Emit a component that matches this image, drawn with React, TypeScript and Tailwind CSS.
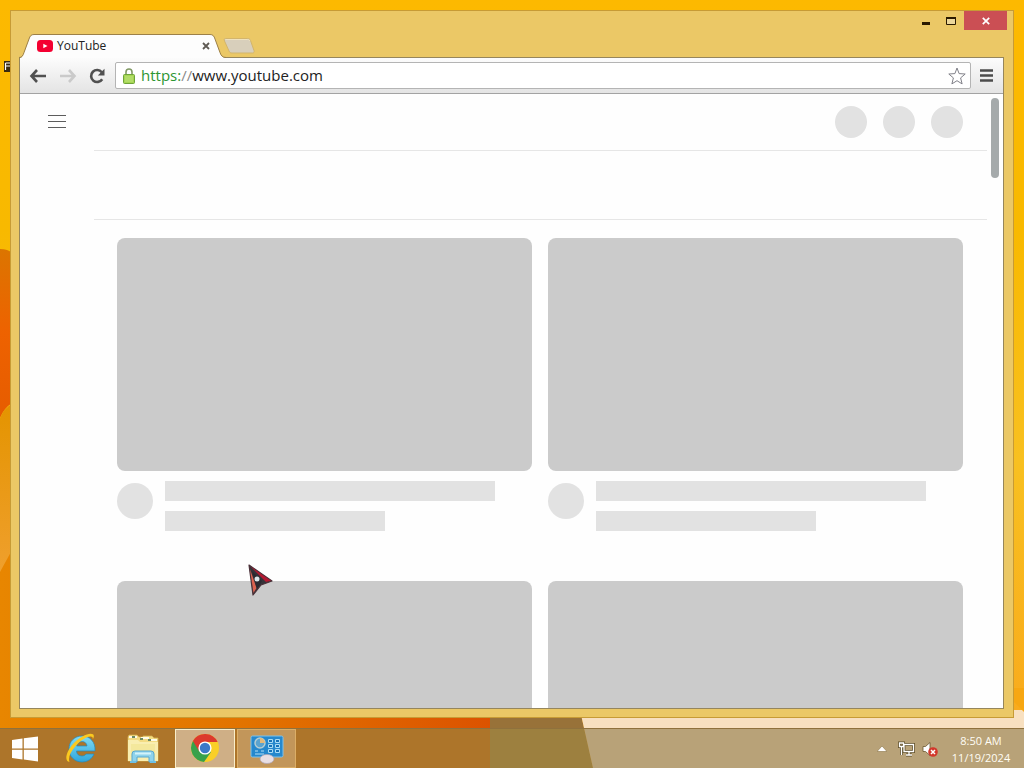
function Wallpaper() {
  return (
    <svg className="absolute inset-0 h-full w-full" viewBox="0 0 1024 768" preserveAspectRatio="none" aria-hidden="true">
      <defs>
        <linearGradient id="sky" x1="0" y1="0" x2="0" y2="1">
          <stop offset="0" stopColor="#fdb900" />
          <stop offset="0.3" stopColor="#f8b900" />
          <stop offset="0.6" stopColor="#f8c020" />
          <stop offset="1" stopColor="#f9a61c" />
        </linearGradient>
        <linearGradient id="ember" x1="0" y1="0" x2="0" y2="1">
          <stop offset="0" stopColor="#dc7500" />
          <stop offset="0.5" stopColor="#ee6200" />
          <stop offset="1" stopColor="#e65c00" />
        </linearGradient>
        <linearGradient id="amber" x1="0" y1="0" x2="0" y2="1">
          <stop offset="0" stopColor="#e49400" />
          <stop offset="0.5" stopColor="#f0a030" />
          <stop offset="1" stopColor="#e8a040" />
        </linearGradient>
        <linearGradient id="floor" x1="0" y1="0" x2="1" y2="0">
          <stop offset="0" stopColor="#e88600" />
          <stop offset="0.5" stopColor="#e27300" />
          <stop offset="1" stopColor="#dc5200" />
        </linearGradient>
      </defs>
      <rect width="1024" height="768" fill="url(#sky)" />
      <path d="M0 249q8 0 12 4v150q-8 5-12 15z" fill="url(#ember)" />
      <path d="M0 418q4-10 12-14v360H0z" fill="url(#amber)" />
      <path d="M0 572l12-22v160h482v58H0z" fill="url(#floor)" />
      <path d="M0 728h494v40H0z" fill="#e07c14" />
      <path d="M490 710h90l4 18h-94z" fill="#987239" />
      <path d="M490 728h94l9 40H490z" fill="#bd9444" />
      <path d="M580 710h444v58H593z" fill="#f8e0c0" />
      <path d="M1012 700l12 12v-24h-12z" fill="#f7a712" />
    </svg>
  );
}

function TabStrip() {
  return (
    <div className="-mb-px flex items-end self-end pl-2">
      <div className="relative h-6 w-[207px]">
        <svg className="absolute inset-0" width="207" height="24" viewBox="0 0 207 24" aria-hidden="true">
          <path
            d="M0 24c3 0 4-2 5-5l5-14c1-3 2-4.500 5-4.500h176c3 0 4 1.500 5 4.500l5 14c1 3 2.500 4.500 6 5z"
            fill="#fdfdfd"
          />
          <path
            d="M0 23.500c3 0 4-2 5-5l5-13.500c1-3 2-4.500 5-4.500h176c3 0 4 1.500 5 4.500l5 13.500c1 3 2.500 5 6 5"
            fill="none"
            stroke="#9c8048"
          />
        </svg>
        <div className="relative flex h-full items-center pr-3 pl-[18px]">
          <svg width="16" height="12" viewBox="0 0 16 12" aria-hidden="true">
            <rect width="16" height="12" rx="3.500" fill="#f40031" />
            <path d="M6.300 3.700v4.600L10.500 6z" fill="#fff" />
          </svg>
          <span className="ml-1 flex-1 text-xs">YouTube</span>
          <button type="button" aria-label="Close tab" className="flex size-4 items-center justify-center">
            <svg width="8" height="8" viewBox="0 0 8 8" aria-hidden="true">
              <path d="M1 1l6 6M7 1L1 7" stroke="#5f5a54" strokeWidth="1.800" />
            </svg>
          </button>
        </div>
      </div>
      <button type="button" aria-label="New tab" className="mb-1 -ml-[3px]">
        <svg width="32" height="16" viewBox="0 0 32 16" aria-hidden="true">
          <path
            d="M2.500.5h22c1.500 0 2.500.5 3 2l3.500 10c.4 1.500 0 2.500-1.500 2.500H9c-1.500 0-2.500-.5-3-2L1.500 3C1 1.500 1 .5 2.500.5z"
            fill="#d8cfbb"
            stroke="#d3b56c"
          />
          <path d="M2.500 1.500h22c1 0 2 .5 2.400 1.500" fill="none" stroke="#efe2be" />
        </svg>
      </button>
    </div>
  );
}

function WindowControls() {
  return (
    <div className="flex h-[19px] pr-[6px]">
      <button type="button" aria-label="Minimize" className="flex w-[25px] items-center justify-center">
        <svg width="10" height="9" viewBox="0 0 10 9" aria-hidden="true">
          <path d="M1 6h8v3H1z" fill="#2a1a00" />
        </svg>
      </button>
      <button type="button" aria-label="Maximize" className="flex w-[26px] items-center justify-center">
        <svg width="10" height="8" viewBox="0 0 10 8" aria-hidden="true">
          <path d="M.5 1v6.500h9V1" fill="#ecd79a" stroke="#2a1a00" />
          <path d="M0 0h10v2H0z" fill="#2a1a00" />
        </svg>
      </button>
      <button type="button" aria-label="Close" className="flex w-[43px] items-center justify-center bg-[#cb4f54]">
        <svg width="8" height="8" viewBox="0 0 8 8" aria-hidden="true">
          <path d="M.8.8l6.400 6.400M7.200.8L.8 7.200" stroke="#fff" strokeWidth="1.700" />
        </svg>
      </button>
    </div>
  );
}

function ArrowIcon() {
  return (
    <svg width="18" height="14" viewBox="0 0 18 14" aria-hidden="true">
      <path d="M8 1L2.500 7 8 13M2.500 7H17" fill="none" stroke="currentColor" strokeWidth="2.600" />
    </svg>
  );
}

function Toolbar() {
  return (
    <div className="flex h-9 shrink-0 items-center border-b border-[#a3a3a3] bg-linear-to-b from-[#fcfcfc] to-[#e4e4e4] pr-[10px] pl-2">
      <button type="button" aria-label="Back" className="flex w-5 justify-center text-[#505050]">
        <ArrowIcon />
      </button>
      <button type="button" aria-label="Forward" className="ml-[10px] flex w-5 justify-center text-[#cacaca]">
        <span className="rotate-180">
          <ArrowIcon />
        </span>
      </button>
      <button type="button" aria-label="Reload" className="ml-[9px] flex w-5 justify-center">
        <svg width="16" height="16" viewBox="0 0 16 16" aria-hidden="true">
          <path d="M12.800 4.200A6 6 0 1 0 13.200 11.200" fill="none" stroke="#505050" strokeWidth="2.600" />
          <path d="M15.500.8v6.700H8.800z" fill="#505050" />
        </svg>
      </button>
      <div className="ml-2 flex h-[27px] flex-1 items-center rounded-[2px] border border-[#b4b4b4] bg-white pr-1 pl-[7px]">
        <svg width="12" height="16" viewBox="0 0 12 16" aria-hidden="true">
          <path d="M3 7V4a3 3 0 0 1 6 0v3" fill="none" stroke="#829a66" strokeWidth="1.600" />
          <rect x=".5" y="6.500" width="11" height="9" rx="1" fill="#a5d652" stroke="#6fa33a" />
          <path d="M2 9h8M2 11h8M2 13h8" stroke="#c6e78c" strokeWidth=".8" />
        </svg>
        <a href="https://www.youtube.com" className="mb-px ml-[6px] flex-1 text-[15px] leading-5 text-[#222]">
          <span className="text-[#2c9632]">https:</span>
          <span className="text-[#8a8a8a]">//</span>www.youtube.com
        </a>
        <button type="button" aria-label="Bookmark this page">
          <svg width="18" height="18" viewBox="0 0 18 18" aria-hidden="true">
            <path
              d="M9 1l2.100 5.600 6.100.4-4.600 3.900 1.500 6L9 13.700l-5.100 3.200 1.500-6L.8 7l6.100-.4z"
              fill="#fff"
              stroke="#808088"
              strokeLinejoin="round"
            />
          </svg>
        </button>
      </div>
      <button type="button" aria-label="Menu" className="ml-[9px]">
        <svg width="13" height="13" viewBox="0 0 13 13" aria-hidden="true">
          <path d="M0 1.500h13M0 6.500h13M0 11.500h13" stroke="#4c4c4c" strokeWidth="2.600" />
        </svg>
      </button>
    </div>
  );
}

function VideoCard() {
  return (
    <article>
      <div className="aspect-video rounded-lg bg-[#cbcbcb]" />
      <div className="flex gap-3 pt-[10px]">
        <div className="mt-[2px] size-9 shrink-0 rounded-full bg-[#e2e2e2]" />
        <div className="flex flex-1 flex-col gap-[10px]">
          <div className="h-5 w-[90%] bg-[#e2e2e2]" />
          <div className="h-5 w-[60%] bg-[#e2e2e2]" />
        </div>
      </div>
    </article>
  );
}

function Page() {
  return (
    <main className="flex min-h-0 flex-1 overflow-hidden bg-[#fefefe]">
      <button type="button" aria-label="Guide" className="mt-[15px] ml-[25px] flex size-6 shrink-0 items-center justify-center">
        <svg width="18" height="13" viewBox="0 0 18 13" aria-hidden="true">
          <path d="M0 .5h18M0 6.500h18M0 12.500h18" stroke="#5c5c5c" />
        </svg>
      </button>
      <div className="ml-[25px] min-w-0 flex-1">
        <header className="flex h-[57px] items-center justify-end gap-4 border-b border-[#e6e6e6] pr-6">
          <div className="size-8 rounded-full bg-[#e2e2e2]" />
          <div className="size-8 rounded-full bg-[#e2e2e2]" />
          <div className="size-8 rounded-full bg-[#e2e2e2]" />
        </header>
        <div className="h-[69px] border-b border-[#e6e6e6]" />
        <div className="grid grid-cols-2 gap-x-4 gap-y-[50px] pt-[18px] pr-6 pl-[23px]">
          <VideoCard />
          <VideoCard />
          <VideoCard />
          <VideoCard />
        </div>
      </div>
      <div className="mt-1 mr-1 ml-1 h-20 w-2 shrink-0 rounded-full bg-[#a5aaab]" />
    </main>
  );
}

function StartIcon() {
  return (
    <svg width="28" height="26" viewBox="0 0 28 26" aria-hidden="true">
      <path d="M1 4l10.500-1.500v10H1zM12.800 2.300L27 .5v12H12.800zM1 13.700h10.500v9.800L1 22zM12.800 13.700H27v11.800l-14.200-1.900z" fill="#fff" />
    </svg>
  );
}

function ExplorerEIcon() {
  return (
    <svg width="32" height="32" viewBox="0 0 32 32" aria-hidden="true">
      <defs>
        <linearGradient id="ie" x1="0" y1="0" x2="0" y2="1">
          <stop offset="0" stopColor="#80dcf4" />
          <stop offset="1" stopColor="#2fa6dc" />
        </linearGradient>
      </defs>
      <path
        d="M17 4C9.500 4 4 9.500 4 17s5.500 13 13 13c5.500 0 10-3 12-8h-8c-1 1.500-2.400 2-4 2-3.300 0-5.300-1.800-5.500-5H30c.7-9-5-15-13-15zm-5.300 10c.6-2.800 2.500-4.400 5.300-4.400s4.700 1.600 5 4.400z"
        fill="url(#ie)"
        stroke="#2489bb"
        strokeWidth=".7"
      />
      <path
        d="M4.500 30C-1 29 1 20 8 12 15 4 25 0 28 2.300c1.300 1 1 3-.2 5 .2-2-.6-2.900-2.400-2.800-4 0-10.500 4.400-15.200 10C5 20.500 3 26 4.500 30z"
        fill="#fbc91f"
      />
    </svg>
  );
}

function FolderIcon() {
  return (
    <svg width="32" height="30" viewBox="0 0 32 30" aria-hidden="true">
      <path d="M1 3l1-2h8l2 2h4V2h9l2 2h4v23H1z" fill="#f3dc83" stroke="#d4b456" strokeWidth=".7" />
      <path d="M2 2h8v2H2zM14 3h8v2h-8zM24 5h6v2h-6z" fill="#fffbe8" />
      <path d="M5 2h3v2H5zM13 4h3v2h-3zM21 5h3v2h-3z" fill="#6c8a62" />
      <path d="M1 6h10l2 2h18v19H1z" fill="#f9eeb0" />
      <path d="M4 10h24v13H4z" fill="#f4e89c" />
      <path d="M5 28v-8q0-3 3-3h16q3 0 3 3v8h-5v-5H10v5z" fill="#8fd3ec" stroke="#58a8cf" />
      <path d="M3 28h6M23 28h6" stroke="#6fc0e3" strokeWidth="2" />
      <path d="M8 19.500h16" stroke="#d3f3fb" strokeWidth="2" />
    </svg>
  );
}

function ChromeIcon() {
  return (
    <svg width="30" height="30" viewBox="0 0 30 30" aria-hidden="true">
      <circle cx="15" cy="15" r="14" fill="#f9cf27" />
      <path d="M15 15L2.900 8A14 14 0 0 0 14 29l7-10z" fill="#37a14b" />
      <path d="M2.900 8A14 14 0 0 1 27.600 9H15l-6 9z" fill="#dc3a2d" />
      <circle cx="15" cy="15" r="6.600" fill="#fff" />
      <circle cx="15" cy="15" r="5.200" fill="#3c79c8" />
    </svg>
  );
}

function PanelIcon() {
  return (
    <svg width="34" height="30" viewBox="0 0 34 30" aria-hidden="true">
      <rect x="1" y="2" width="32" height="21" rx="1.500" fill="#2588cd" stroke="#7fc2eb" />
      <circle cx="10" cy="9" r="5" fill="#5aa3cf" stroke="#b5cdd2" strokeWidth="1.500" />
      <path d="M10 9V4a5 5 0 0 1 5 5z" fill="#e5b978" />
      <path d="M18.500 5.500h4v3h-4zM25.500 5.500h4v3h-4zM18.500 10.500h4v3h-4zM25.500 10.500h4v3h-4zM18.500 15.500h4v3h-4zM25.500 15.500h4v3h-4z" fill="#1773b8" stroke="#a9dcf5" />
      <path d="M5 17h3M11 17h3M5 20h9" stroke="#b3def5" />
      <ellipse cx="17" cy="25" rx="7" ry="4.500" fill="#e8dfe4" stroke="#aaa3b5" strokeWidth=".7" />
    </svg>
  );
}

function Taskbar() {
  return (
    <footer className="relative flex h-10 shrink-0 items-stretch border-t border-[#8f713d] bg-[#83703d]/55 pr-[13px]">
      <button type="button" aria-label="Start" className="flex w-[50px] items-center justify-center">
        <StartIcon />
      </button>
      <button type="button" aria-label="Internet Explorer" className="flex w-[62px] items-center justify-center pb-[2px]">
        <ExplorerEIcon />
      </button>
      <button type="button" aria-label="File Explorer" className="flex w-[62px] items-center justify-center pt-px">
        <FolderIcon />
      </button>
      <button type="button" aria-label="Google Chrome" className="ml-px flex w-[60px] items-center justify-center border border-[#f9eecb] bg-[#cfaf86] pb-[2px]">
        <ChromeIcon />
      </button>
      <button type="button" aria-label="Control Panel" className="ml-[2px] flex w-[59px] items-center justify-center border border-[#dcae66] bg-[#c2965a]">
        <PanelIcon />
      </button>
      <div className="ml-auto flex items-center text-[#fffdf5]">
        <button type="button" aria-label="Show hidden icons">
          <svg width="10" height="6" viewBox="0 0 10 6" aria-hidden="true">
            <path d="M0 5.500L5 0l5 5.500z" fill="#fff" stroke="#8a7444" strokeWidth=".6" />
          </svg>
        </button>
        <button type="button" aria-label="Network" className="ml-[11px]">
          <svg width="17" height="16" viewBox="0 0 17 16" aria-hidden="true">
            <g fill="none" stroke="#5a4a24" strokeWidth="2.800">
              <path d="M6 3.500h9.500v7H6zM8 14h6M11 11v3M1.500 2h4v3.500h-4zM3.500 6v8" />
            </g>
            <g fill="none" stroke="#fff" strokeWidth="1.300">
              <path d="M6 3.500h9.500v7H6zM8 14h6M11 11v3M1.500 2h4v3.500h-4zM3.500 6v8" />
            </g>
          </svg>
        </button>
        <button type="button" aria-label="Volume muted" className="ml-[7px]">
          <svg width="17" height="16" viewBox="0 0 17 16" aria-hidden="true">
            <path d="M1 5.500h2.500L8 1.500v13l-4.500-4H1z" fill="#fff" stroke="#6b5730" strokeWidth=".8" />
            <circle cx="11" cy="11" r="4.800" fill="#d2382c" />
            <path d="M9 9l4 4M13 9l-4 4" stroke="#fff" strokeWidth="1.500" />
          </svg>
        </button>
        <div className="ml-3 w-[60px] text-center text-[11px] leading-[17px] whitespace-nowrap">
          <div>8:50 AM</div>
          <div>11/19/2024</div>
        </div>
      </div>
    </footer>
  );
}

function Pointer() {
  return (
    <svg className="pointer-events-none absolute top-[563px] left-[247px]" width="28" height="34" viewBox="0 0 28 34" aria-hidden="true">
      <path d="M2 2l23 16-11 4-8 10z" fill="#353238" stroke="#4a3038" strokeWidth="1.200" strokeLinejoin="round" />
      <path d="M3.500 3.500L24 17.800l-5 1.200z" fill="#b31831" />
      <path d="M3 6l3.500 24 3-5z" fill="#db6250" />
      <path d="M5 8l10 10-5 8z" fill="#2b2930" />
      <circle cx="10" cy="16" r="2.500" fill="#dce9ec" />
    </svg>
  );
}

export default function App() {
  return (
    <div className="relative flex h-screen flex-col overflow-hidden font-['Open_Sans','Noto_Sans',sans-serif] text-[#222]">
      <Wallpaper />
      <svg className="absolute top-[60px] left-[3px]" width="9" height="13" viewBox="0 0 9 13" aria-hidden="true">
        <path d="M1 1h8v11H1z" fill="#3a2a10" />
        <path d="M2.500 3H8M2.500 3v7M3 6h4" stroke="#fff" strokeWidth="1.200" />
      </svg>
      <div className="relative flex min-h-0 flex-1 p-[10px]">
        <section aria-label="Browser window" className="flex min-w-0 flex-1 flex-col border border-[#c79b35] bg-[#ebc866]">
          <div className="relative z-10 flex h-[46px] shrink-0 items-start justify-between">
            <TabStrip />
            <WindowControls />
          </div>
          <div className="mr-[9px] mb-2 ml-2 flex min-h-0 flex-1 flex-col border border-[#96865c]">
            <Toolbar />
            <Page />
          </div>
        </section>
      </div>
      <Taskbar />
      <Pointer />
    </div>
  );
}
